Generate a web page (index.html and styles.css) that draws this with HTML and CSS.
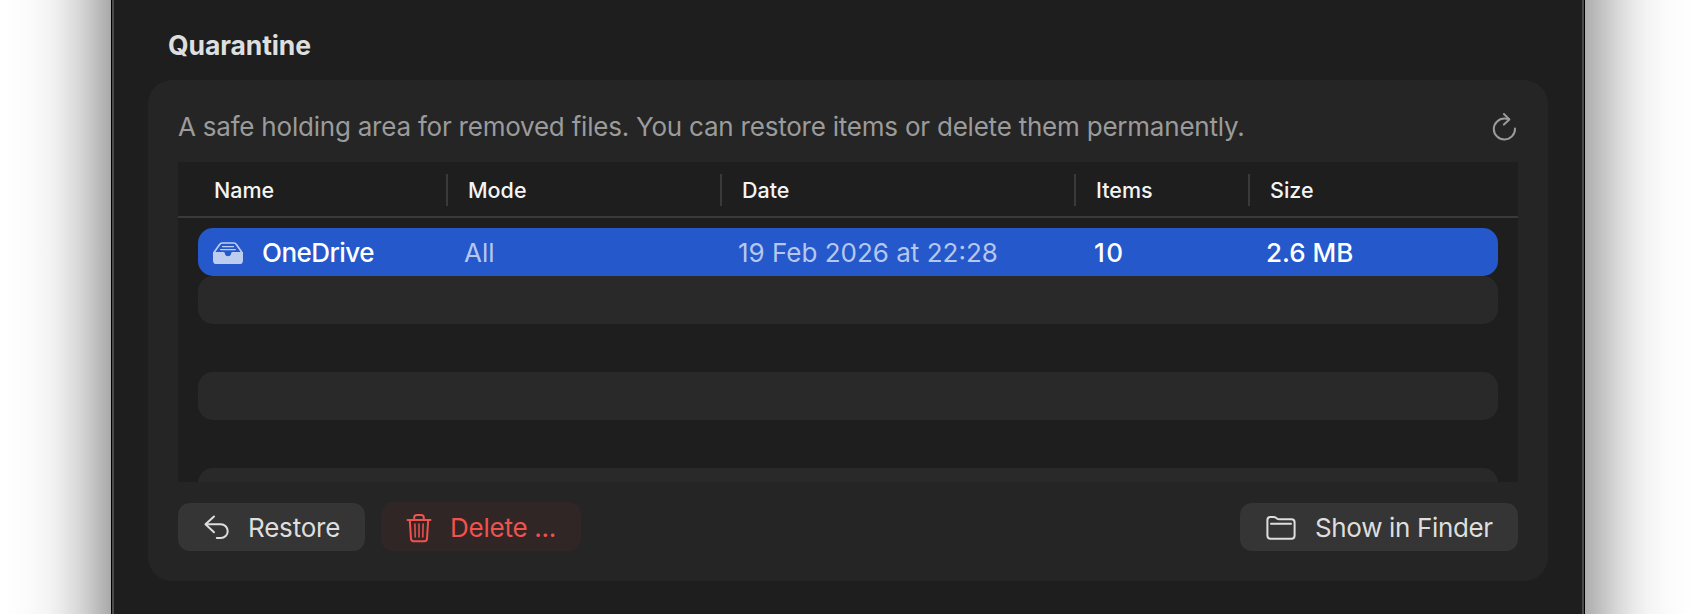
FILE: index.html
```
<!DOCTYPE html>
<html lang="en">
<head>
    <meta charset="UTF-8">
    <meta name="viewport" content="width=device-width, initial-scale=1.0">
    <title>Quarantine</title>
    <link rel="stylesheet" href="styles.css">
</head>
<body>
    <div class="shade shade-left"></div>
    <main class="window">
        <h1>Quarantine</h1>
        <section class="card">
            <div class="intro">
                <p>A safe holding area for removed files. You can restore items or delete them permanently.</p>
                <svg width="26" height="30" viewBox="0 0 26 30" fill="none" stroke="currentColor" stroke-width="2" stroke-linecap="round" stroke-linejoin="round">
                    <path d="M23 16.6A10.6 10.4 0 1 1 12.4 6.6Q14.8 6.6 16.8 7.2"/>
                    <path d="M11.9 2L17.4 7.4L11.9 12.6"/>
                </svg>
            </div>
            <div class="table">
                <div class="columns table-head">
                    <div>Name</div>
                    <div>Mode</div>
                    <div>Date</div>
                    <div>Items</div>
                    <div>Size</div>
                </div>
                <div class="rows">
                    <div class="columns row selected">
                        <div class="name">
                            <svg width="30" height="22" viewBox="0 0 30 22">
                                <path d="M1 10.5L6.6 2.4Q7.6 1 9.2 1H20.8Q22.4 1 23.4 2.4L29 10.5" fill="none" stroke="currentColor" stroke-width="1.7"/>
                                <path d="M9.5 4.6H20.5M7.6 7.6H22.4" fill="none" stroke="currentColor" stroke-width="1.3" stroke-linecap="round"/>
                                <path d="M0 10H10.6Q11.7 10 11.8 11.3Q12.2 14.3 15 14.3T18.2 11.3Q18.3 10 19.4 10H30V18.4Q30 22 26.4 22H3.6Q0 22 0 18.4Z" fill="currentColor"/>
                            </svg>
                            <span>OneDrive</span>
                        </div>
                        <div class="muted">All</div>
                        <div class="muted">19 Feb 2026 at 22:28</div>
                        <div class="count">10</div>
                        <div>2.6 MB</div>
                    </div>
                    <div class="row striped"></div>
                    <div class="row"></div>
                    <div class="row striped"></div>
                    <div class="row"></div>
                    <div class="row striped"></div>
                </div>
            </div>
            <div class="actions">
                <button class="restore" type="button">
                    <svg width="26" height="26" viewBox="0 0 26 26" fill="none" stroke="currentColor" stroke-width="2" stroke-linecap="round" stroke-linejoin="round">
                        <path d="M10 1.5L1.5 9.3L10 17.2"/>
                        <path d="M2 9.3H16.8A6.9 6.9 0 0 1 16.8 23.1H12.8"/>
                    </svg>
                    <span>Restore</span>
                </button>
                <button class="delete" type="button">
                    <svg width="26" height="30" viewBox="0 0 26 30" fill="none" stroke="currentColor" stroke-width="2" stroke-linecap="round" stroke-linejoin="round">
                        <path d="M1.5 7H24.5"/>
                        <path d="M8.2 7V4.6Q8.2 2 10.8 2H15.2Q17.8 2 17.8 4.6V7"/>
                        <path d="M3.8 7L5 25.8Q5.2 28.2 7.6 28.2H18.4Q20.8 28.2 21 25.8L22.2 7"/>
                        <path d="M8.9 11L9.2 24M13 11V24M17.1 11L16.8 24" stroke-width="1.5"/>
                    </svg>
                    <span>Delete ...</span>
                </button>
                <button class="finder" type="button">
                    <svg width="30" height="26" viewBox="0 0 30 26" fill="none" stroke="currentColor" stroke-width="2" stroke-linecap="round" stroke-linejoin="round">
                        <path d="M1.4 5Q1.4 2 4.4 2H7.6Q9 2 10 2.8L11.2 3.7Q12 4.3 13.2 4.3H25.4Q28.6 4.3 28.6 7.5V20.6Q28.6 23.8 25.4 23.8H4.6Q1.4 23.8 1.4 20.6Z"/>
                        <path d="M5 8.7H25"/>
                    </svg>
                    <span>Show in Finder</span>
                </button>
            </div>
        </section>
    </main>
    <div class="shade shade-right"></div>
</body>
</html>
```
FILE: styles.css
```
* {
    box-sizing: border-box;
}
body {
    margin: 0;
    height: 614px;
    display: flex;
    overflow: hidden;
    background-color: #fff;
    font-family: Inter, "Liberation Sans", sans-serif;
    font-size: 26px;
    line-height: 32px;
}
.shade {
    width: 111px;
    flex: none;
    background: linear-gradient(to left, #a9a9a9, #b9b9b9 11px, #cacaca 22px, #dadada 34px, #e9e9e9 48px, #f4f4f4 62px, #fbfbfb 82px, #fff 108px);
}
.shade-right {
    background: linear-gradient(to right, #adadad, #bbb 11px, #cacaca 22px, #dadada 34px, #e9e9e9 48px, #f4f4f4 62px, #fbfbfb 82px, #fff 108px);
}
.window {
    width: 1474px;
    flex: none;
    padding: 29px 36px 0;
    background-color: #1e1e1e;
    border: solid #000;
    border-width: 0 1px;
    box-shadow: inset 2px 0 #4b4b4b, inset -2px 0 #4b4b4b;
}
h1 {
    margin: 0 0 19px 20px;
    color: #dedede;
    font-size: 26.5px;
    font-weight: 700;
    line-height: 32px;
    letter-spacing: -0.1px;
}
.card {
    height: 501px;
    padding: 31px 30px 30px;
    background-color: #252525;
    border-radius: 24px;
}
.intro {
    display: flex;
    align-items: center;
    justify-content: space-between;
    height: 32px;
    margin-bottom: 19px;
    color: #9b9b9b;
}
.intro p {
    margin: 0;
    letter-spacing: -0.22px;
    white-space: nowrap;
}
.table {
    height: 320px;
    overflow: hidden;
    background-color: #1e1e1e;
}
.columns {
    display: grid;
    grid-template-columns: 270px 274px 354px 174px 1fr;
    align-items: center;
    white-space: nowrap;
}
.table-head {
    height: 56px;
    padding-top: 2px;
    border-bottom: 2px solid #3a3a3a;
    color: #f4f4f4;
    font-size: 21.5px;
    font-weight: 500;
}
.table-head div {
    height: 32px;
    padding-left: 20px;
    border-right: 2px solid #3a3a3a;
}
.table-head div:first-child {
    padding-left: 36px;
}
.table-head div:last-child {
    border-right: none;
}
.rows {
    padding: 10px 20px 0;
}
.row {
    height: 48px;
    border-radius: 15px;
}
.striped {
    background-color: #292929;
}
.selected {
    grid-template-columns: 266px 274px 355px 173px 1fr;
    padding-top: 1px;
    background-color: #2458cb;
    color: #fff;
    font-weight: 500;
}
.name {
    display: flex;
    align-items: center;
    gap: 19px;
    padding-left: 15px;
    letter-spacing: -0.55px;
}
.name svg {
    color: #bdcdf0;
}
.muted {
    color: #b6c7ee;
    font-weight: 400;
}
.count {
    padding-left: 1px;
    letter-spacing: 1.5px;
}
.actions {
    display: flex;
    align-items: flex-end;
    gap: 16px;
    height: 49px;
    margin-top: 20px;
}
button {
    display: flex;
    align-items: center;
    height: 48px;
    padding: 1px 0 0 26px;
    border: none;
    border-radius: 12px;
    background-color: #353535;
    color: #dedede;
    font: inherit;
    letter-spacing: -0.35px;
    white-space: nowrap;
}
.restore {
    width: 187px;
    gap: 18px;
    letter-spacing: -0.2px;
}
.delete {
    width: 200px;
    height: 49px;
    padding-top: 2px;
    padding-left: 25px;
    gap: 18px;
    background-color: #302626;
    color: #f0524d;
    letter-spacing: -0.25px;
}
.finder {
    width: 278px;
    margin-left: auto;
    gap: 19px;
}
```
